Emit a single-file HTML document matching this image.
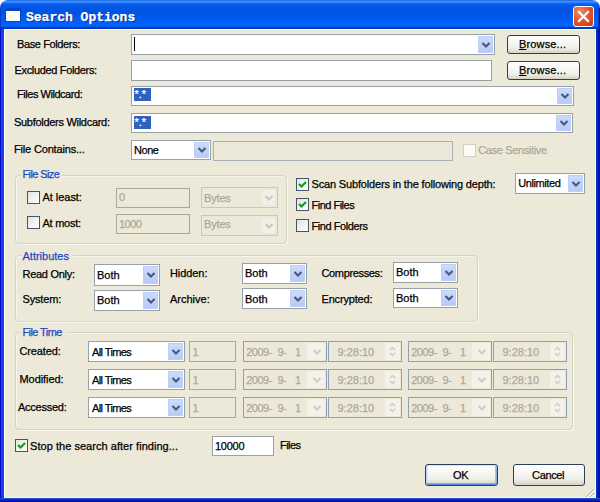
<!DOCTYPE html><html><head><meta charset="utf-8"><style>
html,body{margin:0;padding:0;width:600px;height:502px;overflow:hidden;background:#fff}
#win{position:absolute;left:0;top:0;width:600px;height:502px;overflow:hidden}
.t{position:absolute;white-space:nowrap;font-family:"Liberation Sans",sans-serif;line-height:13px;-webkit-text-stroke:0.25px currentColor}
</style></head><body><div id="win">
<div style="position:absolute;left:0px;top:29px;width:600px;height:473px;background:linear-gradient(90deg,#0010C0 0px,#0010C0 1px,#1A3FE8 1px,#1A3FE8 4px,transparent 4px,transparent 596px,#0838D0 596px,#0030C0 597px,#0020B0 598px,#0010A0 599px,#0010A0 600px)"></div>
<div style="position:absolute;left:0px;top:498px;width:600px;height:4px;background:linear-gradient(#2050D8 0px,#2050D8 1px,#0430C8 1px,#0430C8 2px,#0020B0 2px,#0020B0 3px,#000C88 3px)"></div>
<div style="position:absolute;left:0px;top:0px;width:600px;height:29px;border-radius:8px 8px 0 0;background:linear-gradient(#0A4BD0 0px,#3D95FF 1px,#3D8FFF 2px,#1A6FF5 3px,#0058E6 5px,#0054E0 12px,#005CF0 19px,#0063FF 24px,#0061FF 26px,#0050E0 27px,#0038B8 28px,#0038B8 29px)"></div>
<div style="position:absolute;left:0px;top:8px;width:1px;height:21px;background:#0A3CC8"></div>
<div style="position:absolute;left:599px;top:8px;width:1px;height:21px;background:#0020A8"></div>
<div style="position:absolute;left:598px;top:8px;width:1px;height:21px;background:#0838D0"></div>
<div style="position:absolute;left:4px;top:29px;width:592px;height:469px;background:#ECE9D8;box-shadow:inset 1px 1px 0 #FFFFFF, inset 0 -1px 0 #F4F2EC, inset -1px 0 0 #FFFDF0, inset -2px 0 0 #E2E0D2"></div>
<div style="position:absolute;left:5px;top:8px;width:16px;height:14px;background:#0842C8;border-radius:1px"></div>
<div style="position:absolute;left:6px;top:11px;width:14px;height:10px;background:#FDFDF6"></div>
<div class="t" style="left:26px;top:10px;font-family:'Liberation Mono',monospace;font-weight:bold;font-size:13px;line-height:16px;color:#fff;text-shadow:1px 1px 0 #0A1F80">Search Options</div>
<div style="position:absolute;left:573px;top:6px;width:21px;height:21px;box-sizing:border-box;border:1px solid #FFFFFF;border-radius:3px;background:radial-gradient(circle at 30% 25%,#EE8A68,#E2542C 50%,#C83A16)"></div>
<svg style="position:absolute;left:573px;top:6px" width="21" height="21" viewBox="0 0 21 21"><path d="M6 6 L15 15 M15 6 L6 15" stroke="#fff" stroke-width="2.2" stroke-linecap="square"/></svg>
<div class="t" style="left:17.00px;top:37.69px;font-size:11px;color:#000;letter-spacing:-0.38px;">Base Folders:</div>
<div style="position:absolute;left:131px;top:34px;width:364px;height:21px;box-sizing:border-box;border:1px solid #98A0AA;background:#fff"></div>
<div style="position:absolute;left:478px;top:36px;width:15px;height:17px;box-sizing:border-box;border:1px solid #BDD0F8;background:linear-gradient(#CCDAFC,#B8CAF6)"></div>
<svg style="position:absolute;left:480.5px;top:40.5px" width="10" height="8" viewBox="0 0 10 8"><path d="M1.5 2 L5 5.5 L8.5 2" fill="none" stroke="#45577C" stroke-width="2.1" stroke-linecap="butt"/></svg>
<div style="position:absolute;left:134px;top:37px;width:1px;height:14px;background:#000"></div>
<div style="position:absolute;left:507px;top:35px;width:73px;height:19px;box-sizing:border-box;border:1px solid #2A3F5C;border-radius:3px;background:linear-gradient(#FFFFFF,#F0F0EA 70%,#D6D0C5)"></div>
<div class="t" style="left:519.00px;top:38.39px;font-size:11px;color:#000;letter-spacing:0.15px;"><span style="text-decoration:underline">B</span>rowse...</div>
<div class="t" style="left:14.50px;top:63.69px;font-size:11px;color:#000;letter-spacing:-0.34px;">Excluded Folders:</div>
<div style="position:absolute;left:131px;top:60px;width:361px;height:21px;box-sizing:border-box;border:1px solid #98A0AA;background:#fff"></div>
<div style="position:absolute;left:507px;top:61px;width:73px;height:19px;box-sizing:border-box;border:1px solid #2A3F5C;border-radius:3px;background:linear-gradient(#FFFFFF,#F0F0EA 70%,#D6D0C5)"></div>
<div class="t" style="left:519.00px;top:63.89px;font-size:11px;color:#000;letter-spacing:0.15px;"><span style="text-decoration:underline">B</span>rowse...</div>
<div class="t" style="left:17.00px;top:87.69px;font-size:11px;color:#000;letter-spacing:-0.46px;">Files Wildcard:</div>
<div style="position:absolute;left:131px;top:86px;width:443px;height:20px;box-sizing:border-box;border:1px solid #98A0AA;background:#fff"></div>
<div style="position:absolute;left:557px;top:88px;width:15px;height:16px;box-sizing:border-box;border:1px solid #BDD0F8;background:linear-gradient(#CCDAFC,#B8CAF6)"></div>
<svg style="position:absolute;left:559.5px;top:92.0px" width="10" height="8" viewBox="0 0 10 8"><path d="M1.5 2 L5 5.5 L8.5 2" fill="none" stroke="#45577C" stroke-width="2.1" stroke-linecap="butt"/></svg>
<div style="position:absolute;left:134px;top:88px;width:17px;height:13px;background:#2F62C0"></div>
<div class="t" style="left:134.50px;top:87.69px;font-size:11px;color:#fff;">*.*</div>
<div class="t" style="left:14.00px;top:116.19px;font-size:11px;color:#000;letter-spacing:-0.29px;">Subfolders Wildcard:</div>
<div style="position:absolute;left:131px;top:113px;width:442px;height:20px;box-sizing:border-box;border:1px solid #98A0AA;background:#fff"></div>
<div style="position:absolute;left:556px;top:115px;width:15px;height:16px;box-sizing:border-box;border:1px solid #BDD0F8;background:linear-gradient(#CCDAFC,#B8CAF6)"></div>
<svg style="position:absolute;left:558.5px;top:119.0px" width="10" height="8" viewBox="0 0 10 8"><path d="M1.5 2 L5 5.5 L8.5 2" fill="none" stroke="#45577C" stroke-width="2.1" stroke-linecap="butt"/></svg>
<div style="position:absolute;left:134px;top:116px;width:17px;height:13px;background:#2F62C0"></div>
<div class="t" style="left:134.50px;top:115.69px;font-size:11px;color:#fff;">*.*</div>
<div class="t" style="left:14.00px;top:143.44px;font-size:11px;color:#000;letter-spacing:-0.17px;">File Contains...</div>
<div style="position:absolute;left:131px;top:140px;width:80px;height:20px;box-sizing:border-box;border:1px solid #98A0AA;background:#fff"></div>
<div style="position:absolute;left:194px;top:142px;width:15px;height:16px;box-sizing:border-box;border:1px solid #BDD0F8;background:linear-gradient(#CCDAFC,#B8CAF6)"></div>
<svg style="position:absolute;left:196.5px;top:146.0px" width="10" height="8" viewBox="0 0 10 8"><path d="M1.5 2 L5 5.5 L8.5 2" fill="none" stroke="#45577C" stroke-width="2.1" stroke-linecap="butt"/></svg>
<div class="t" style="left:134.00px;top:144.19px;font-size:11px;color:#000;letter-spacing:-0.45px;">None</div>
<div style="position:absolute;left:213px;top:141px;width:240px;height:20px;box-sizing:border-box;border:1px solid #A8B0BC;background:#ECE9D8"></div>
<div style="position:absolute;left:463px;top:144px;width:13px;height:13px;box-sizing:border-box;border:1px solid #D2D0C2;background:#FBFBF8"></div>
<div class="t" style="left:478.20px;top:144.19px;font-size:11px;color:#ACA899;letter-spacing:-0.35px;">Case Sensitive</div>
<div style="position:absolute;left:15px;top:175px;width:272px;height:69px;box-sizing:border-box;border:1px solid #D5D3C3;border-radius:4px;box-shadow:1px 1px 0 rgba(255,255,255,0.6), inset 1px 1px 0 rgba(255,255,255,0.5)"></div>
<div style="position:absolute;left:21px;top:173px;width:41px;height:5px;background:#ECE9D8"></div>
<div class="t" style="left:22.50px;top:168.44px;font-size:11px;color:#1F48C0;letter-spacing:-0.6px;">File Size</div>
<div style="position:absolute;left:27px;top:191px;width:13px;height:13px;box-sizing:border-box;border:1px solid #45546A;background:linear-gradient(135deg,#E2E4DE,#FFFFFF)"></div>
<div class="t" style="left:42.50px;top:191.44px;font-size:11px;color:#000;letter-spacing:-0.04px;">At least:</div>
<div style="position:absolute;left:116px;top:188px;width:74px;height:20px;box-sizing:border-box;border:1px solid #A8A89E;background:#ECE9D8"></div>
<div class="t" style="left:119.00px;top:191.39px;font-size:11px;color:#ACA899;">0</div>
<div style="position:absolute;left:201px;top:187px;width:77px;height:21px;box-sizing:border-box;border:1px solid #C9C7BA;background:#ECE9D8"></div>
<div style="position:absolute;left:261px;top:189px;width:15px;height:17px;box-sizing:border-box;border:1px solid #E8E8E0;background:#F0EFE8;border-radius:1px"></div>
<svg style="position:absolute;left:263.5px;top:193.5px" width="10" height="8" viewBox="0 0 10 8"><path d="M1.5 2 L5 5.5 L8.5 2" fill="none" stroke="#C9C7BA" stroke-width="2.1" stroke-linecap="butt"/></svg>
<div class="t" style="left:204.10px;top:192.19px;font-size:11px;color:#ACA899;letter-spacing:-0.2px;">Bytes</div>
<div style="position:absolute;left:27px;top:216px;width:13px;height:13px;box-sizing:border-box;border:1px solid #45546A;background:linear-gradient(135deg,#E2E4DE,#FFFFFF)"></div>
<div class="t" style="left:42.50px;top:216.69px;font-size:11px;color:#000;letter-spacing:-0.25px;">At most:</div>
<div style="position:absolute;left:116px;top:214px;width:74px;height:20px;box-sizing:border-box;border:1px solid #A8A89E;background:#ECE9D8"></div>
<div class="t" style="left:119.00px;top:217.69px;font-size:11px;color:#ACA899;letter-spacing:-0.5px;">1000</div>
<div style="position:absolute;left:201px;top:215px;width:77px;height:21px;box-sizing:border-box;border:1px solid #C9C7BA;background:#ECE9D8"></div>
<div style="position:absolute;left:261px;top:217px;width:15px;height:17px;box-sizing:border-box;border:1px solid #E8E8E0;background:#F0EFE8;border-radius:1px"></div>
<svg style="position:absolute;left:263.5px;top:221.5px" width="10" height="8" viewBox="0 0 10 8"><path d="M1.5 2 L5 5.5 L8.5 2" fill="none" stroke="#C9C7BA" stroke-width="2.1" stroke-linecap="butt"/></svg>
<div class="t" style="left:204.10px;top:218.49px;font-size:11px;color:#ACA899;letter-spacing:-0.2px;">Bytes</div>
<div style="position:absolute;left:296px;top:178px;width:13px;height:13px;box-sizing:border-box;border:1px solid #45546A;background:linear-gradient(135deg,#E2E4DE,#FFFFFF)"></div>
<svg style="position:absolute;left:296px;top:178px" width="13" height="13" viewBox="0 0 13 13"><path d="M3 6 L5.5 8.5 L10 4" fill="none" stroke="#1E961E" stroke-width="2.2"/></svg>
<div class="t" style="left:311.50px;top:178.49px;font-size:11px;color:#000;letter-spacing:-0.16px;">Scan Subfolders in the following depth:</div>
<div style="position:absolute;left:296px;top:198px;width:13px;height:13px;box-sizing:border-box;border:1px solid #45546A;background:linear-gradient(135deg,#E2E4DE,#FFFFFF)"></div>
<svg style="position:absolute;left:296px;top:198px" width="13" height="13" viewBox="0 0 13 13"><path d="M3 6 L5.5 8.5 L10 4" fill="none" stroke="#1E961E" stroke-width="2.2"/></svg>
<div class="t" style="left:311.50px;top:198.69px;font-size:11px;color:#000;letter-spacing:-0.5px;">Find Files</div>
<div style="position:absolute;left:296px;top:219px;width:13px;height:13px;box-sizing:border-box;border:1px solid #45546A;background:linear-gradient(135deg,#E2E4DE,#FFFFFF)"></div>
<div class="t" style="left:311.50px;top:219.69px;font-size:11px;color:#000;letter-spacing:-0.43px;">Find Folders</div>
<div style="position:absolute;left:515px;top:173px;width:70px;height:21px;box-sizing:border-box;border:1px solid #98A0AA;background:#fff"></div>
<div style="position:absolute;left:568px;top:175px;width:15px;height:17px;box-sizing:border-box;border:1px solid #BDD0F8;background:linear-gradient(#CCDAFC,#B8CAF6)"></div>
<svg style="position:absolute;left:570.5px;top:179.5px" width="10" height="8" viewBox="0 0 10 8"><path d="M1.5 2 L5 5.5 L8.5 2" fill="none" stroke="#45577C" stroke-width="2.1" stroke-linecap="butt"/></svg>
<div class="t" style="left:518.20px;top:177.19px;font-size:11px;color:#000;letter-spacing:-0.4px;">Unlimited</div>
<div style="position:absolute;left:15px;top:255px;width:463px;height:67px;box-sizing:border-box;border:1px solid #D5D3C3;border-radius:4px;box-shadow:1px 1px 0 rgba(255,255,255,0.6), inset 1px 1px 0 rgba(255,255,255,0.5)"></div>
<div style="position:absolute;left:21px;top:253px;width:52px;height:5px;background:#ECE9D8"></div>
<div class="t" style="left:22.50px;top:249.69px;font-size:11px;color:#1F48C0;letter-spacing:0.0px;">Attributes</div>
<div class="t" style="left:22.50px;top:267.69px;font-size:11px;color:#000;letter-spacing:-0.28px;">Read Only:</div>
<div style="position:absolute;left:94px;top:264px;width:66px;height:22px;box-sizing:border-box;border:1px solid #98A0AA;background:#fff"></div>
<div style="position:absolute;left:143px;top:266px;width:15px;height:18px;box-sizing:border-box;border:1px solid #BDD0F8;background:linear-gradient(#CCDAFC,#B8CAF6)"></div>
<svg style="position:absolute;left:145.5px;top:271.0px" width="10" height="8" viewBox="0 0 10 8"><path d="M1.5 2 L5 5.5 L8.5 2" fill="none" stroke="#45577C" stroke-width="2.1" stroke-linecap="butt"/></svg>
<div class="t" style="left:97.00px;top:268.94px;font-size:11px;color:#000;letter-spacing:0.0px;">Both</div>
<div class="t" style="left:22.50px;top:292.69px;font-size:11px;color:#000;letter-spacing:-0.17px;">System:</div>
<div style="position:absolute;left:94px;top:290px;width:66px;height:21px;box-sizing:border-box;border:1px solid #98A0AA;background:#fff"></div>
<div style="position:absolute;left:143px;top:292px;width:15px;height:17px;box-sizing:border-box;border:1px solid #BDD0F8;background:linear-gradient(#CCDAFC,#B8CAF6)"></div>
<svg style="position:absolute;left:145.5px;top:296.5px" width="10" height="8" viewBox="0 0 10 8"><path d="M1.5 2 L5 5.5 L8.5 2" fill="none" stroke="#45577C" stroke-width="2.1" stroke-linecap="butt"/></svg>
<div class="t" style="left:97.00px;top:294.19px;font-size:11px;color:#000;letter-spacing:0.0px;">Both</div>
<div class="t" style="left:170.00px;top:267.19px;font-size:11px;color:#000;letter-spacing:-0.08px;">Hidden:</div>
<div style="position:absolute;left:242px;top:263px;width:65px;height:21px;box-sizing:border-box;border:1px solid #98A0AA;background:#fff"></div>
<div style="position:absolute;left:290px;top:265px;width:15px;height:17px;box-sizing:border-box;border:1px solid #BDD0F8;background:linear-gradient(#CCDAFC,#B8CAF6)"></div>
<svg style="position:absolute;left:292.5px;top:269.5px" width="10" height="8" viewBox="0 0 10 8"><path d="M1.5 2 L5 5.5 L8.5 2" fill="none" stroke="#45577C" stroke-width="2.1" stroke-linecap="butt"/></svg>
<div class="t" style="left:245.00px;top:267.19px;font-size:11px;color:#000;letter-spacing:0.0px;">Both</div>
<div class="t" style="left:170.00px;top:292.94px;font-size:11px;color:#000;letter-spacing:0.0px;">Archive:</div>
<div style="position:absolute;left:242px;top:288px;width:65px;height:21px;box-sizing:border-box;border:1px solid #98A0AA;background:#fff"></div>
<div style="position:absolute;left:290px;top:290px;width:15px;height:17px;box-sizing:border-box;border:1px solid #BDD0F8;background:linear-gradient(#CCDAFC,#B8CAF6)"></div>
<svg style="position:absolute;left:292.5px;top:294.5px" width="10" height="8" viewBox="0 0 10 8"><path d="M1.5 2 L5 5.5 L8.5 2" fill="none" stroke="#45577C" stroke-width="2.1" stroke-linecap="butt"/></svg>
<div class="t" style="left:245.00px;top:292.69px;font-size:11px;color:#000;letter-spacing:0.0px;">Both</div>
<div class="t" style="left:321.50px;top:267.19px;font-size:11px;color:#000;letter-spacing:-0.35px;">Compresses:</div>
<div style="position:absolute;left:393px;top:262px;width:65px;height:21px;box-sizing:border-box;border:1px solid #98A0AA;background:#fff"></div>
<div style="position:absolute;left:441px;top:264px;width:15px;height:17px;box-sizing:border-box;border:1px solid #BDD0F8;background:linear-gradient(#CCDAFC,#B8CAF6)"></div>
<svg style="position:absolute;left:443.5px;top:268.5px" width="10" height="8" viewBox="0 0 10 8"><path d="M1.5 2 L5 5.5 L8.5 2" fill="none" stroke="#45577C" stroke-width="2.1" stroke-linecap="butt"/></svg>
<div class="t" style="left:396.00px;top:266.39px;font-size:11px;color:#000;letter-spacing:0.0px;">Both</div>
<div class="t" style="left:321.50px;top:292.69px;font-size:11px;color:#000;letter-spacing:-0.17px;">Encrypted:</div>
<div style="position:absolute;left:393px;top:288px;width:65px;height:20px;box-sizing:border-box;border:1px solid #98A0AA;background:#fff"></div>
<div style="position:absolute;left:441px;top:290px;width:15px;height:16px;box-sizing:border-box;border:1px solid #BDD0F8;background:linear-gradient(#CCDAFC,#B8CAF6)"></div>
<svg style="position:absolute;left:443.5px;top:294.0px" width="10" height="8" viewBox="0 0 10 8"><path d="M1.5 2 L5 5.5 L8.5 2" fill="none" stroke="#45577C" stroke-width="2.1" stroke-linecap="butt"/></svg>
<div class="t" style="left:396.00px;top:291.69px;font-size:11px;color:#000;letter-spacing:0.0px;">Both</div>
<div style="position:absolute;left:15px;top:332px;width:558px;height:98px;box-sizing:border-box;border:1px solid #D5D3C3;border-radius:4px;box-shadow:1px 1px 0 rgba(255,255,255,0.6), inset 1px 1px 0 rgba(255,255,255,0.5)"></div>
<div style="position:absolute;left:21px;top:330px;width:45px;height:5px;background:#ECE9D8"></div>
<div class="t" style="left:22.50px;top:325.94px;font-size:11px;color:#1F48C0;letter-spacing:-0.6px;">File Time</div>
<div class="t" style="left:19.50px;top:345.19px;font-size:11px;color:#000;letter-spacing:-0.14px;">Created:</div>
<div style="position:absolute;left:88px;top:341px;width:97px;height:21px;box-sizing:border-box;border:1px solid #98A0AA;background:#fff"></div>
<div style="position:absolute;left:168px;top:343px;width:15px;height:17px;box-sizing:border-box;border:1px solid #BDD0F8;background:linear-gradient(#CCDAFC,#B8CAF6)"></div>
<svg style="position:absolute;left:170.5px;top:347.5px" width="10" height="8" viewBox="0 0 10 8"><path d="M1.5 2 L5 5.5 L8.5 2" fill="none" stroke="#45577C" stroke-width="2.1" stroke-linecap="butt"/></svg>
<div class="t" style="left:92.00px;top:345.69px;font-size:11px;color:#000;letter-spacing:-0.6px;">All Times</div>
<div style="position:absolute;left:189px;top:341px;width:47px;height:21px;box-sizing:border-box;border:1px solid #A8A89E;background:#ECE9D8"></div>
<div class="t" style="left:192.50px;top:345.69px;font-size:11px;color:#ACA899;">1</div>
<div style="position:absolute;left:243px;top:341px;width:84px;height:21px;box-sizing:border-box;border:1px solid #909FB4;background:#ECE9D8"></div>
<div class="t" style="left:246.20px;top:345.69px;font-size:11px;color:#ACA899;letter-spacing:-0.5px;">2009-</div>
<div class="t" style="left:277.50px;top:345.69px;font-size:11px;color:#ACA899;letter-spacing:-0.5px;">9-</div>
<div class="t" style="left:295.00px;top:345.69px;font-size:11px;color:#ACA899;">1</div>
<div style="position:absolute;left:307px;top:343px;width:18px;height:17px;background:#F2F1EA"></div>
<svg style="position:absolute;left:311.5px;top:347.5px" width="10" height="8" viewBox="0 0 10 8"><path d="M1.5 2 L5 5.5 L8.5 2" fill="none" stroke="#CFCDC2" stroke-width="2.1" stroke-linecap="butt"/></svg>
<div style="position:absolute;left:328px;top:341px;width:74px;height:21px;box-sizing:border-box;border:1px solid #909FB4;background:#ECE9D8"></div>
<div class="t" style="left:337.50px;top:345.69px;font-size:11px;color:#ACA899;letter-spacing:0.0px;">9:28:10</div>
<div style="position:absolute;left:385px;top:343px;width:15px;height:17px;background:#F2F1EA"></div>
<svg style="position:absolute;left:388px;top:345px" width="9" height="13" viewBox="0 0 9 13"><path d="M2 5 L4.5 2.5 L7 5 M2 8 L4.5 10.5 L7 8" fill="none" stroke="#CFCDC2" stroke-width="1.5"/></svg>
<div style="position:absolute;left:408px;top:341px;width:84px;height:21px;box-sizing:border-box;border:1px solid #909FB4;background:#ECE9D8"></div>
<div class="t" style="left:411.20px;top:345.69px;font-size:11px;color:#ACA899;letter-spacing:-0.5px;">2009-</div>
<div class="t" style="left:442.50px;top:345.69px;font-size:11px;color:#ACA899;letter-spacing:-0.5px;">9-</div>
<div class="t" style="left:460.00px;top:345.69px;font-size:11px;color:#ACA899;">1</div>
<div style="position:absolute;left:472px;top:343px;width:18px;height:17px;background:#F2F1EA"></div>
<svg style="position:absolute;left:476.5px;top:347.5px" width="10" height="8" viewBox="0 0 10 8"><path d="M1.5 2 L5 5.5 L8.5 2" fill="none" stroke="#CFCDC2" stroke-width="2.1" stroke-linecap="butt"/></svg>
<div style="position:absolute;left:493px;top:341px;width:74px;height:21px;box-sizing:border-box;border:1px solid #909FB4;background:#ECE9D8"></div>
<div class="t" style="left:502.50px;top:345.69px;font-size:11px;color:#ACA899;letter-spacing:0.0px;">9:28:10</div>
<div style="position:absolute;left:550px;top:343px;width:15px;height:17px;background:#F2F1EA"></div>
<svg style="position:absolute;left:553px;top:345px" width="9" height="13" viewBox="0 0 9 13"><path d="M2 5 L4.5 2.5 L7 5 M2 8 L4.5 10.5 L7 8" fill="none" stroke="#CFCDC2" stroke-width="1.5"/></svg>
<div class="t" style="left:19.50px;top:372.69px;font-size:11px;color:#000;letter-spacing:-0.06px;">Modified:</div>
<div style="position:absolute;left:88px;top:369px;width:97px;height:21px;box-sizing:border-box;border:1px solid #98A0AA;background:#fff"></div>
<div style="position:absolute;left:168px;top:371px;width:15px;height:17px;box-sizing:border-box;border:1px solid #BDD0F8;background:linear-gradient(#CCDAFC,#B8CAF6)"></div>
<svg style="position:absolute;left:170.5px;top:375.5px" width="10" height="8" viewBox="0 0 10 8"><path d="M1.5 2 L5 5.5 L8.5 2" fill="none" stroke="#45577C" stroke-width="2.1" stroke-linecap="butt"/></svg>
<div class="t" style="left:92.00px;top:373.69px;font-size:11px;color:#000;letter-spacing:-0.6px;">All Times</div>
<div style="position:absolute;left:189px;top:369px;width:47px;height:21px;box-sizing:border-box;border:1px solid #A8A89E;background:#ECE9D8"></div>
<div class="t" style="left:192.50px;top:373.69px;font-size:11px;color:#ACA899;">1</div>
<div style="position:absolute;left:243px;top:369px;width:84px;height:21px;box-sizing:border-box;border:1px solid #909FB4;background:#ECE9D8"></div>
<div class="t" style="left:246.20px;top:373.69px;font-size:11px;color:#ACA899;letter-spacing:-0.5px;">2009-</div>
<div class="t" style="left:277.50px;top:373.69px;font-size:11px;color:#ACA899;letter-spacing:-0.5px;">9-</div>
<div class="t" style="left:295.00px;top:373.69px;font-size:11px;color:#ACA899;">1</div>
<div style="position:absolute;left:307px;top:371px;width:18px;height:17px;background:#F2F1EA"></div>
<svg style="position:absolute;left:311.5px;top:375.5px" width="10" height="8" viewBox="0 0 10 8"><path d="M1.5 2 L5 5.5 L8.5 2" fill="none" stroke="#CFCDC2" stroke-width="2.1" stroke-linecap="butt"/></svg>
<div style="position:absolute;left:328px;top:369px;width:74px;height:21px;box-sizing:border-box;border:1px solid #909FB4;background:#ECE9D8"></div>
<div class="t" style="left:337.50px;top:373.69px;font-size:11px;color:#ACA899;letter-spacing:0.0px;">9:28:10</div>
<div style="position:absolute;left:385px;top:371px;width:15px;height:17px;background:#F2F1EA"></div>
<svg style="position:absolute;left:388px;top:373px" width="9" height="13" viewBox="0 0 9 13"><path d="M2 5 L4.5 2.5 L7 5 M2 8 L4.5 10.5 L7 8" fill="none" stroke="#CFCDC2" stroke-width="1.5"/></svg>
<div style="position:absolute;left:408px;top:369px;width:84px;height:21px;box-sizing:border-box;border:1px solid #909FB4;background:#ECE9D8"></div>
<div class="t" style="left:411.20px;top:373.69px;font-size:11px;color:#ACA899;letter-spacing:-0.5px;">2009-</div>
<div class="t" style="left:442.50px;top:373.69px;font-size:11px;color:#ACA899;letter-spacing:-0.5px;">9-</div>
<div class="t" style="left:460.00px;top:373.69px;font-size:11px;color:#ACA899;">1</div>
<div style="position:absolute;left:472px;top:371px;width:18px;height:17px;background:#F2F1EA"></div>
<svg style="position:absolute;left:476.5px;top:375.5px" width="10" height="8" viewBox="0 0 10 8"><path d="M1.5 2 L5 5.5 L8.5 2" fill="none" stroke="#CFCDC2" stroke-width="2.1" stroke-linecap="butt"/></svg>
<div style="position:absolute;left:493px;top:369px;width:74px;height:21px;box-sizing:border-box;border:1px solid #909FB4;background:#ECE9D8"></div>
<div class="t" style="left:502.50px;top:373.69px;font-size:11px;color:#ACA899;letter-spacing:0.0px;">9:28:10</div>
<div style="position:absolute;left:550px;top:371px;width:15px;height:17px;background:#F2F1EA"></div>
<svg style="position:absolute;left:553px;top:373px" width="9" height="13" viewBox="0 0 9 13"><path d="M2 5 L4.5 2.5 L7 5 M2 8 L4.5 10.5 L7 8" fill="none" stroke="#CFCDC2" stroke-width="1.5"/></svg>
<div class="t" style="left:18.00px;top:401.44px;font-size:11px;color:#000;letter-spacing:-0.25px;">Accessed:</div>
<div style="position:absolute;left:88px;top:397px;width:97px;height:21px;box-sizing:border-box;border:1px solid #98A0AA;background:#fff"></div>
<div style="position:absolute;left:168px;top:399px;width:15px;height:17px;box-sizing:border-box;border:1px solid #BDD0F8;background:linear-gradient(#CCDAFC,#B8CAF6)"></div>
<svg style="position:absolute;left:170.5px;top:403.5px" width="10" height="8" viewBox="0 0 10 8"><path d="M1.5 2 L5 5.5 L8.5 2" fill="none" stroke="#45577C" stroke-width="2.1" stroke-linecap="butt"/></svg>
<div class="t" style="left:92.00px;top:401.69px;font-size:11px;color:#000;letter-spacing:-0.6px;">All Times</div>
<div style="position:absolute;left:189px;top:397px;width:47px;height:21px;box-sizing:border-box;border:1px solid #A8A89E;background:#ECE9D8"></div>
<div class="t" style="left:192.50px;top:401.69px;font-size:11px;color:#ACA899;">1</div>
<div style="position:absolute;left:243px;top:397px;width:84px;height:21px;box-sizing:border-box;border:1px solid #909FB4;background:#ECE9D8"></div>
<div class="t" style="left:246.20px;top:401.69px;font-size:11px;color:#ACA899;letter-spacing:-0.5px;">2009-</div>
<div class="t" style="left:277.50px;top:401.69px;font-size:11px;color:#ACA899;letter-spacing:-0.5px;">9-</div>
<div class="t" style="left:295.00px;top:401.69px;font-size:11px;color:#ACA899;">1</div>
<div style="position:absolute;left:307px;top:399px;width:18px;height:17px;background:#F2F1EA"></div>
<svg style="position:absolute;left:311.5px;top:403.5px" width="10" height="8" viewBox="0 0 10 8"><path d="M1.5 2 L5 5.5 L8.5 2" fill="none" stroke="#CFCDC2" stroke-width="2.1" stroke-linecap="butt"/></svg>
<div style="position:absolute;left:328px;top:397px;width:74px;height:21px;box-sizing:border-box;border:1px solid #909FB4;background:#ECE9D8"></div>
<div class="t" style="left:337.50px;top:401.69px;font-size:11px;color:#ACA899;letter-spacing:0.0px;">9:28:10</div>
<div style="position:absolute;left:385px;top:399px;width:15px;height:17px;background:#F2F1EA"></div>
<svg style="position:absolute;left:388px;top:401px" width="9" height="13" viewBox="0 0 9 13"><path d="M2 5 L4.5 2.5 L7 5 M2 8 L4.5 10.5 L7 8" fill="none" stroke="#CFCDC2" stroke-width="1.5"/></svg>
<div style="position:absolute;left:408px;top:397px;width:84px;height:21px;box-sizing:border-box;border:1px solid #909FB4;background:#ECE9D8"></div>
<div class="t" style="left:411.20px;top:401.69px;font-size:11px;color:#ACA899;letter-spacing:-0.5px;">2009-</div>
<div class="t" style="left:442.50px;top:401.69px;font-size:11px;color:#ACA899;letter-spacing:-0.5px;">9-</div>
<div class="t" style="left:460.00px;top:401.69px;font-size:11px;color:#ACA899;">1</div>
<div style="position:absolute;left:472px;top:399px;width:18px;height:17px;background:#F2F1EA"></div>
<svg style="position:absolute;left:476.5px;top:403.5px" width="10" height="8" viewBox="0 0 10 8"><path d="M1.5 2 L5 5.5 L8.5 2" fill="none" stroke="#CFCDC2" stroke-width="2.1" stroke-linecap="butt"/></svg>
<div style="position:absolute;left:493px;top:397px;width:74px;height:21px;box-sizing:border-box;border:1px solid #909FB4;background:#ECE9D8"></div>
<div class="t" style="left:502.50px;top:401.69px;font-size:11px;color:#ACA899;letter-spacing:0.0px;">9:28:10</div>
<div style="position:absolute;left:550px;top:399px;width:15px;height:17px;background:#F2F1EA"></div>
<svg style="position:absolute;left:553px;top:401px" width="9" height="13" viewBox="0 0 9 13"><path d="M2 5 L4.5 2.5 L7 5 M2 8 L4.5 10.5 L7 8" fill="none" stroke="#CFCDC2" stroke-width="1.5"/></svg>
<div style="position:absolute;left:15px;top:439px;width:13px;height:13px;box-sizing:border-box;border:1px solid #45546A;background:linear-gradient(135deg,#E2E4DE,#FFFFFF)"></div>
<svg style="position:absolute;left:15px;top:439px" width="13" height="13" viewBox="0 0 13 13"><path d="M3 6 L5.5 8.5 L10 4" fill="none" stroke="#1E961E" stroke-width="2.2"/></svg>
<div class="t" style="left:30.00px;top:439.69px;font-size:11px;color:#000;letter-spacing:0.04px;">Stop the search after finding...</div>
<div style="position:absolute;left:212px;top:436px;width:62px;height:20px;box-sizing:border-box;border:1px solid #98A0AA;background:#fff"></div>
<div class="t" style="left:215.00px;top:439.69px;font-size:11px;color:#000;letter-spacing:-0.25px;">10000</div>
<div class="t" style="left:280.10px;top:439.19px;font-size:11px;color:#000;letter-spacing:-0.6px;">Files</div>
<div style="position:absolute;left:425px;top:464px;width:73px;height:22px;box-sizing:border-box;border:1px solid #2A3F5C;border-radius:3px;background:linear-gradient(#FFFFFF,#F0F0EA 70%,#D6D0C5);box-shadow:inset 0 1px 0 #CEE7FF, inset 1px 0 0 #BCD4F6, inset -1px 0 0 #89ADE4, inset 0 -1px 0 #5F8BDC, inset 0 -2px 0 #86A8E6, inset 2px 0 0 #D8E6FA, inset -2px 0 0 #A8C2EE"></div>
<div class="t" style="left:453.10px;top:468.69px;font-size:11px;color:#000;letter-spacing:-0.5px;">OK</div>
<div style="position:absolute;left:513px;top:464px;width:72px;height:22px;box-sizing:border-box;border:1px solid #2A3F5C;border-radius:3px;background:linear-gradient(#FFFFFF,#F0F0EA 70%,#D6D0C5)"></div>
<div class="t" style="left:532.10px;top:468.69px;font-size:11px;color:#000;letter-spacing:-0.38px;">Cancel</div>
<svg style="position:absolute;left:583px;top:486px" width="12" height="12" viewBox="0 0 12 12"><path d="M11 3 L3 11 M11 7 L7 11" stroke="#B8B4A2" stroke-width="1"/><path d="M12 4 L4 12 M12 8 L8 12" stroke="#fff" stroke-width="1"/></svg>
</div></body></html>
